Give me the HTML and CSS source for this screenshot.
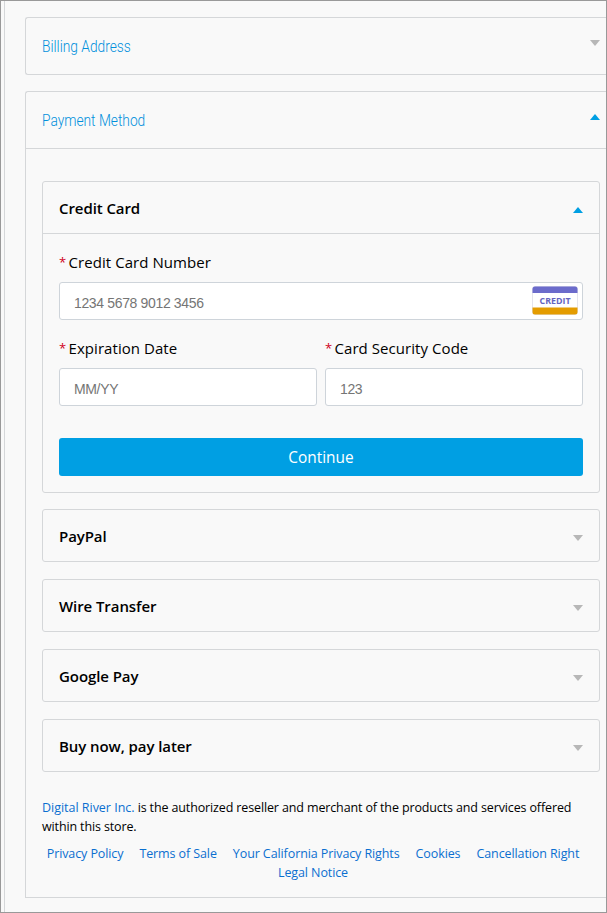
FILE: index.html
```html
<!DOCTYPE html>
<html lang="en">
<head>
<meta charset="utf-8">
<title>Checkout</title>
<link rel="stylesheet" href="styles.css">
</head>
<body>
<div class="frame">
<main class="checkout">
  <section class="panel">
    <header class="panel-head"><h2 class="panel-title">Billing Address</h2><i class="caret down"></i></header>
  </section>
  <section class="panel open">
    <header class="panel-head"><h2 class="panel-title">Payment Method</h2><i class="caret up"></i></header>
    <div class="panel-body">
      <div class="method expanded">
        <div class="method-head"><h3 class="method-title">Credit Card</h3><i class="caret up"></i></div>
        <form class="card-form">
          <div class="field">
            <label for="num"><span class="req">*</span>Credit Card Number</label>
            <div class="input-wrap">
              <input id="num" type="text" placeholder="1234 5678 9012 3456">
              <svg class="brand" width="46" height="29" viewBox="0 0 46 29">
                <rect x=".5" y=".5" width="45" height="28" rx="2.5" fill="#fff" stroke="#e4e4ec"/>
                <path d="M.5 7V3A2.500 2.500 0 0 1 3 .5h40A2.500 2.500 0 0 1 45.500 3v4z" fill="#6b6bcb"/>
                <path d="M.5 21.500h45V26a2.500 2.500 0 0 1-2.500 2.500H3A2.500 2.500 0 0 1 .5 26z" fill="#e49c00"/>
                <text x="23" y="17.500" text-anchor="middle" textLength="31" lengthAdjust="spacingAndGlyphs" class="brand-text">CREDIT</text>
              </svg>
            </div>
          </div>
          <div class="row">
            <div class="field">
              <label for="exp"><span class="req">*</span>Expiration Date</label>
              <input id="exp" type="text" placeholder="MM/YY">
            </div>
            <div class="field">
              <label for="cvv"><span class="req">*</span>Card Security Code</label>
              <input id="cvv" type="text" placeholder="123">
            </div>
          </div>
          <button type="button" class="continue">Continue</button>
        </form>
      </div>
      <div class="method"><div class="method-head"><h3 class="method-title">PayPal</h3><i class="caret down"></i></div></div>
      <div class="method"><div class="method-head"><h3 class="method-title">Wire Transfer</h3><i class="caret down"></i></div></div>
      <div class="method"><div class="method-head"><h3 class="method-title">Google Pay</h3><i class="caret down"></i></div></div>
      <div class="method"><div class="method-head"><h3 class="method-title">Buy now, pay later</h3><i class="caret down"></i></div></div>
      <p class="legal"><a>Digital River Inc.</a> is the authorized reseller and merchant of the products and services offered<br>within this store.</p>
      <nav class="links"><a>Privacy Policy</a><a>Terms of Sale</a><a>Your California Privacy Rights</a><a>Cookies</a><a>Cancellation Right</a><a>Legal Notice</a></nav>
    </div>
  </section>
</main>
</div>
</body>
</html>
```
FILE: styles.css
```css
* { box-sizing: border-box; }
body { margin: 0; background: #f9f9f9; color: #000; font-family: "Open Sans", sans-serif; font-size: 15px; }
h2, h3, p { margin: 0; }
.frame { height: 913px; border: 1px solid #999; padding-left: 3px; overflow: hidden; }
.checkout { height: 911px; border-left: 1px solid #d5d7d9; padding: 16px 0 0 20px; }
.panel { height: 58px; border: 1px solid #d5d7d9; border-right: 0; border-radius: 3px 0 0 3px; margin-bottom: 16px; }
.panel.open { height: 807px; border-bottom-left-radius: 0; }
.panel-head { height: 56px; display: flex; align-items: center; justify-content: space-between; padding: 0 6px 0 16px; }
.open > .panel-head { height: 57px; border-bottom: 1px solid #d5d7d9; }
.panel-head .caret { margin-bottom: 6px; }
.panel-title { font-family: Roboto, sans-serif; font-size: 16px; font-weight: 300; color: #0090dc; line-height: 24px; transform: scaleX(.86); transform-origin: 0 50%; white-space: nowrap; padding-top: 2px; }
.caret { width: 10px; height: 6px; background: #b7b7b7; clip-path: polygon(0 0, 100% 0, 50% 100%); }
.caret.up { background: #009fe3; clip-path: polygon(50% 0, 100% 100%, 0 100%); }
.panel-body { width: 590px; padding: 32px 16px 0; }
.method { height: 53px; width: 558px; border: 1px solid #d5d7d9; border-radius: 3px; margin-bottom: 17px; }
.method.expanded { height: 312px; margin-bottom: 16px; }
.method-head { height: 51px; display: flex; align-items: center; justify-content: space-between; padding: 0 16px; }
.expanded .method-head { height: 52px; border-bottom: 1px solid #d5d7d9; }
.method-head .caret { margin-top: 5px; }
.method-title { font-size: 15px; font-weight: 600; line-height: 24px; letter-spacing: -.08px; }
.card-form { padding: 16px; }
label { display: flex; height: 24px; line-height: 24px; margin-bottom: 8px; font-size: 15px; letter-spacing: .06px; white-space: nowrap; }
.req { width: 9.500px; color: #d0021b; font-size: 13px; }
.input-wrap { position: relative; }
.brand { position: absolute; right: 5px; top: 4px; }
.brand-text { font: 700 9px "Open Sans", sans-serif; fill: #6464c0; }
input { display: block; width: 100%; height: 38px; border: 1px solid #ced4da; border-radius: 3px; background: #fff; padding: 4px 14px 0; font: 14px "Liberation Sans", sans-serif; letter-spacing: -.35px; }
input::placeholder { color: #757575; opacity: 1; }
.row { display: grid; grid-template-columns: 1fr 1fr; gap: 8px; margin-top: 16px; }
.continue { display: block; width: 100%; height: 38px; margin-top: 32px; border: 0; border-radius: 3px; background: #009fe3; color: #fff; font: 15.400px "Open Sans", sans-serif; padding: 0; }
.legal { margin-top: 26px; font-size: 12.500px; line-height: 19px; letter-spacing: -.13px; white-space: nowrap; }
.legal a { letter-spacing: -.02px; }
a { color: #0b6fd0; }
.links { display: flex; flex-wrap: wrap; justify-content: center; column-gap: 16px; width: 542px; margin-top: 8px; font-size: 12.500px; line-height: 19px; letter-spacing: -.1px; }
.links a { white-space: nowrap; }
```
